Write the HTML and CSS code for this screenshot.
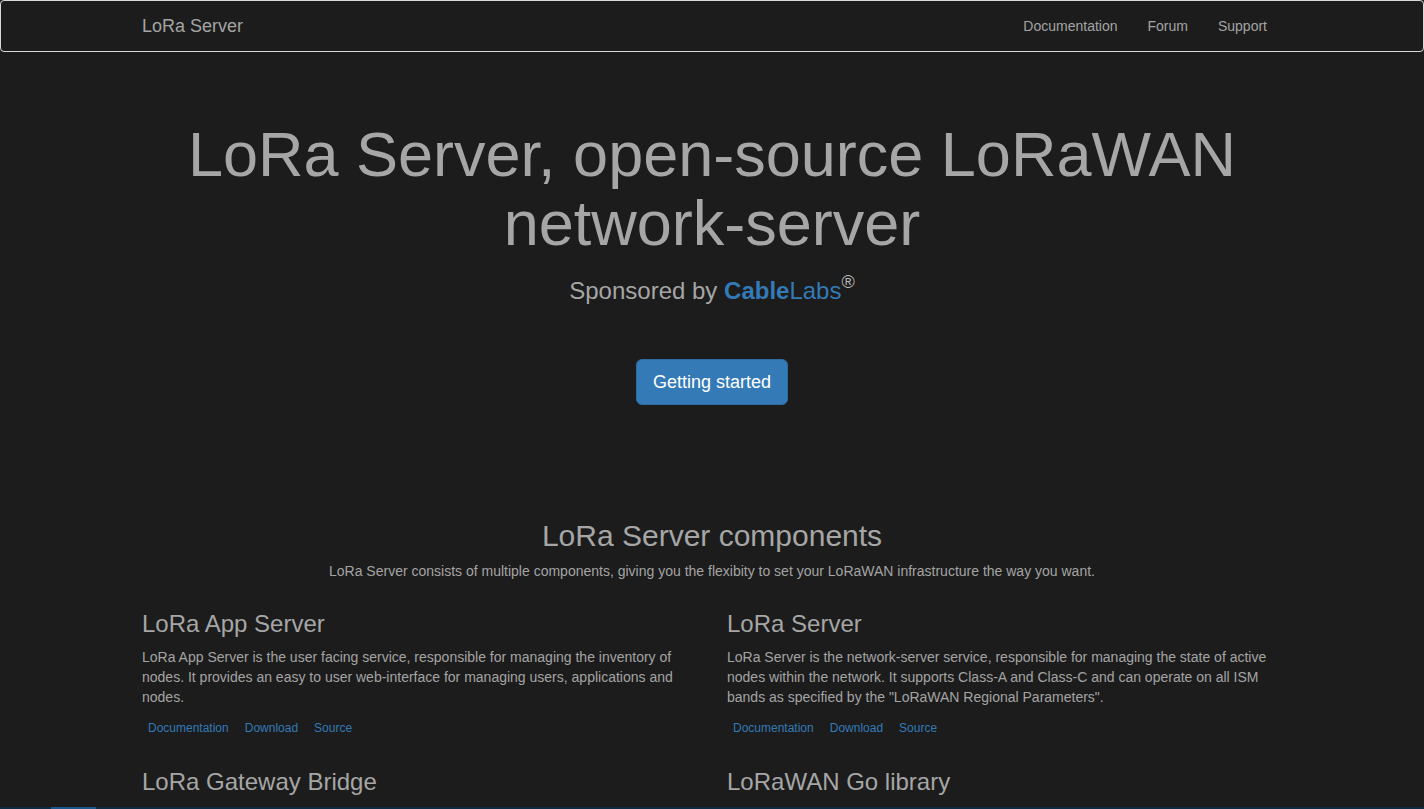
FILE: index.html
```html
<!DOCTYPE html>
<html lang="en">
<head>
<meta charset="utf-8">
<title>LoRa Server, open-source LoRaWAN network-server</title>
<link rel="stylesheet" href="styles.css">
</head>
<body>
<nav class="navbar">
  <div class="container nav-inner">
    <a class="brand" href="#">LoRa Server</a>
    <ul class="nav-links">
      <li><a href="#">Documentation</a></li>
      <li><a href="#">Forum</a></li>
      <li><a href="#">Support</a></li>
    </ul>
  </div>
</nav>

<header class="hero">
  <div class="container">
    <h1 class="hero-title">LoRa Server, open-source LoRaWAN network-server</h1>
    <p class="sponsor">Sponsored by <a class="cablelabs" href="#"><b>Cable</b>Labs</a><sup>®</sup></p>
    <a class="btn-primary" href="#">Getting started</a>
  </div>
</header>

<section class="components">
  <div class="container">
    <h2 class="section-title">LoRa Server components</h2>
    <p class="section-sub">LoRa Server consists of multiple components, giving you the flexibity to set your LoRaWAN infrastructure the way you want.</p>
    <div class="grid">
      <div class="component">
        <h3>LoRa App Server</h3>
        <p>LoRa App Server is the user facing service, responsible for managing the inventory of nodes. It provides an easy to user web-interface for managing users, applications and nodes.</p>
        <ul class="links">
          <li><a href="#">Documentation</a></li>
          <li><a href="#">Download</a></li>
          <li><a href="#">Source</a></li>
        </ul>
      </div>
      <div class="component">
        <h3>LoRa Server</h3>
        <p>LoRa Server is the network-server service, responsible for managing the state of active nodes within the network. It supports Class-A and Class-C and can operate on all ISM bands as specified by the "LoRaWAN Regional Parameters".</p>
        <ul class="links">
          <li><a href="#">Documentation</a></li>
          <li><a href="#">Download</a></li>
          <li><a href="#">Source</a></li>
        </ul>
      </div>
      <div class="component">
        <h3>LoRa Gateway Bridge</h3>
      </div>
      <div class="component">
        <h3>LoRaWAN Go library</h3>
      </div>
    </div>
  </div>
</section>

<section class="blue-band">
  <div class="band-tab"></div>
</section>
</body>
</html>
```

FILE: styles.css
```css
* { box-sizing: border-box; }

html, body {
  margin: 0;
  padding: 0;
}

body {
  background: #1c1c1c;
  color: #a4a4a4;
  font-family: "Liberation Sans", Arial, Helvetica, sans-serif;
  font-size: 14px;
  line-height: 20px;
}

a { text-decoration: none; }

.container {
  width: 1170px;
  margin: 0 auto;
  padding: 0 15px;
}

/* Navbar */
.navbar {
  height: 52px;
  border: 1px solid #d9d9d9;
  border-radius: 4px;
  background: #1c1c1c;
}

.nav-inner {
  display: flex;
  align-items: center;
  justify-content: space-between;
  height: 50px;
}

.brand {
  color: #a4a4a4;
  font-size: 18px;
  line-height: 20px;
}

.nav-links {
  display: flex;
  list-style: none;
  margin: 0;
  padding: 0;
}

.nav-links li a {
  display: block;
  color: #a4a4a4;
  font-size: 14px;
  padding: 15px 15px;
  line-height: 20px;
}

/* Hero */
.hero {
  padding-top: 68px;
  text-align: center;
}

.hero-title {
  margin: 0 0 15px;
  font-size: 63px;
  font-weight: normal;
  line-height: 1.1;
  color: #a6a6a6;
}

.sponsor {
  margin: 0 0 51px;
  font-size: 24px;
  line-height: 34px;
  color: #a6a6a6;
}

.cablelabs { color: #337ab7; }

.sponsor sup {
  font-size: 18px;
  line-height: 0;
  position: relative;
  top: -2px;
  vertical-align: super;
  color: #b5b5b5;
}

.btn-primary {
  display: inline-block;
  padding: 10px 16px;
  font-size: 18px;
  line-height: 24px;
  color: #fff;
  background: #337ab7;
  border: 1px solid #2e6da4;
  border-radius: 6px;
}

/* Components */
.components {
  padding-top: 114px;
}

.section-title {
  margin: 0 0 9px;
  text-align: center;
  font-size: 30px;
  font-weight: normal;
  line-height: 33px;
  color: #a6a6a6;
}

.section-sub {
  margin: 0 0 30px;
  text-align: center;
}

.grid {
  display: grid;
  grid-template-columns: 1fr 1fr;
  column-gap: 30px;
  row-gap: 31px;
}

.component h3 {
  margin: 0 0 10px;
  font-size: 24px;
  font-weight: normal;
  line-height: 26.4px;
  color: #a6a6a6;
}

.component p {
  margin: 0 0 11px;
}

.links {
  display: flex;
  gap: 16px;
  list-style: none;
  margin: 0;
  padding: 0 0 0 6px;
  font-size: 12px;
  line-height: 20px;
}

.links a { color: #337ab7; }

.blue-band {
  margin-top: 2px;
  height: 60px;
  background: #0b2a43;
}

.band-tab {
  margin-left: 51px;
  width: 45px;
  height: 60px;
  background: #19568c;
}
```
